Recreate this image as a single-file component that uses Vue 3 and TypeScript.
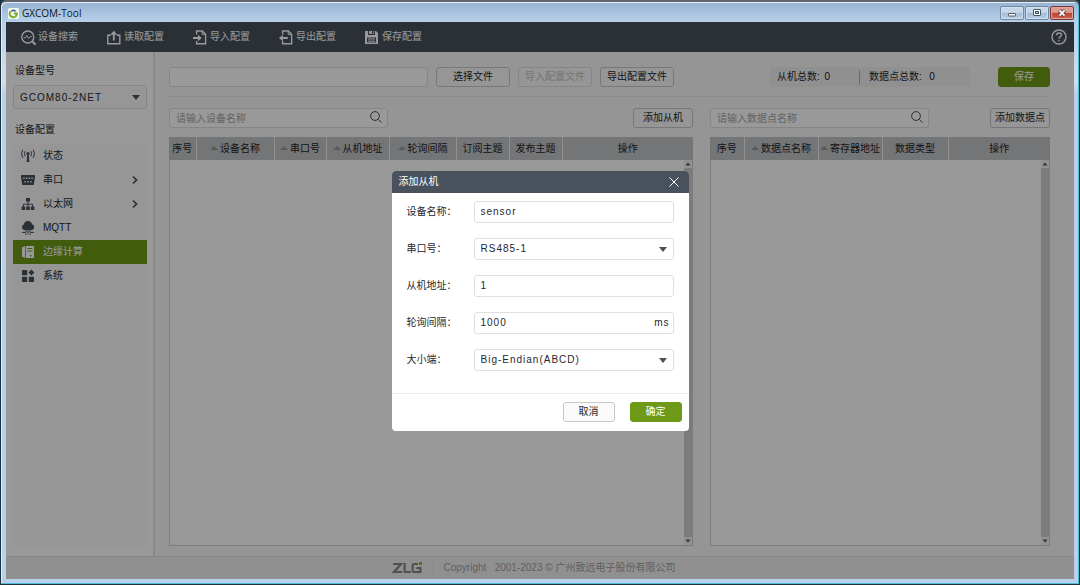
<script setup lang="ts">
import { ref } from 'vue'

interface Column { title: string; width?: number; sortable?: boolean }
interface MenuItem { id: string; title: string; expandable?: boolean }

const tools = [
  { id: 'search', title: '设备搜索' },
  { id: 'read', title: '读取配置' },
  { id: 'import', title: '导入配置' },
  { id: 'export', title: '导出配置' },
  { id: 'save', title: '保存配置' },
]

const menu: MenuItem[] = [
  { id: 'status', title: '状态' },
  { id: 'serial', title: '串口', expandable: true },
  { id: 'ethernet', title: '以太网', expandable: true },
  { id: 'mqtt', title: 'MQTT' },
  { id: 'edge', title: '边缘计算' },
  { id: 'system', title: '系统' },
]
const active = ref('edge')

const slaveColumns: Column[] = [
  { title: '序号', width: 27 },
  { title: '设备名称', width: 78, sortable: true },
  { title: '串口号', width: 52, sortable: true },
  { title: '从机地址', width: 63, sortable: true },
  { title: '轮询间隔', width: 67, sortable: true },
  { title: '订阅主题', width: 53 },
  { title: '发布主题', width: 53 },
  { title: '操作' },
]
const pointColumns: Column[] = [
  { title: '序号', width: 34 },
  { title: '数据点名称', width: 74, sortable: true },
  { title: '寄存器地址', width: 64, sortable: true },
  { title: '数据类型', width: 66 },
  { title: '操作' },
]
const panels = [
  { id: 'slave', placeholder: '请输入设备名称', action: '添加从机', columns: slaveColumns },
  { id: 'point', placeholder: '请输入数据点名称', action: '添加数据点', columns: pointColumns },
]

const model = ref('GCOM80-2NET')
const filePath = ref('')
const slaveCount = ref(0)
const pointCount = ref(0)
const dialogOpen = ref(true)
const form = ref({ name: 'sensor', port: 'RS485-1', address: '1', interval: '1000', endian: 'Big-Endian(ABCD)' })
</script>

<template>
  <div class="window">
    <header class="titlebar">
      <svg class="app-icon" viewBox="0 0 12 12">
        <rect width="12" height="12" rx="2" fill="#f4f7f4" />
        <path d="M2.6 3.6A4 4 0 1 0 9.8 6H6.4" fill="none" stroke="#7fae2c" stroke-width="2.2" />
        <path d="M2.6 3.6Q6 0 9.4 3.4L7.6 4Q6 2.6 4.4 4Z" fill="#315c7c" />
      </svg>
      <span class="app-title">GXCOM-Tool</span>
      <div class="window-buttons">
        <button type="button" aria-label="最小化">
          <svg viewBox="0 0 22 12"><rect x="7.5" y="6.5" width="7" height="2.5" rx="0.5" fill="#fff" stroke="#4b5868" /></svg>
        </button>
        <button type="button" aria-label="最大化">
          <svg viewBox="0 0 22 12"><rect x="7.5" y="2.5" width="7" height="6" rx="0.5" fill="#fff" stroke="#4b5868" /><rect x="9.5" y="4.5" width="3" height="2" fill="#a9c0da" stroke="#4b5868" /></svg>
        </button>
        <button type="button" class="close" aria-label="关闭">
          <svg viewBox="0 0 22 12"><path d="M8.3 3.2L13.7 8.8M13.7 3.2L8.3 8.8" stroke="#5b3a40" stroke-width="3.4" /><path d="M8.5 3.3L13.5 8.7M13.5 3.3L8.5 8.7" stroke="#fff" stroke-width="1.9" /></svg>
        </button>
      </div>
    </header>

    <div class="client">
      <nav class="toolbar">
        <button v-for="tool in tools" :key="tool.id" type="button" class="tool">
          <svg v-if="tool.id === 'search'" viewBox="0 0 15 15"><circle cx="6.8" cy="7" r="6" /><path d="M11.2 11.4L14.6 14.8" stroke-width="2" /><path d="M2.8 7.8H4.3L5.8 5.4L7.6 8.6L9 6.6H10.8" stroke-width="1" /></svg>
          <svg v-else-if="tool.id === 'read'" viewBox="0 0 15 15"><path d="M3.8 5.2H.8V13.8H12.8V5.2H9.8" /><path d="M6.8 10.5V3" stroke-width="1.8" /><path d="M3.2 4.8L6.8 .8L10.4 4.8Z" class="solid" /></svg>
          <svg v-else-if="tool.id === 'import'" viewBox="0 0 15 15"><path d="M3.6 4.5V1H9.4L12.6 4.2V13.8H3.6V11" /><path d="M9.2 1V4.4H12.6" stroke-width="1" /><path d="M0 8H5.5" stroke-width="2" /><path d="M5 4.8L8.8 8L5 11.2Z" class="solid" /></svg>
          <svg v-else-if="tool.id === 'export'" viewBox="0 0 15 15"><path d="M3.6 4.5V1H9.4L12.6 4.2V13.8H3.6V11" /><path d="M9.2 1V4.4H12.6" stroke-width="1" /><path d="M3.4 8H8.8" stroke-width="2" /><path d="M3.8 4.8L0 8L3.8 11.2Z" class="solid" /></svg>
          <svg v-else viewBox="0 0 15 15"><path d="M0 1H3V5H10V1H11L13 3V14H0Z M2 7.4V12.6H11V7.4Z" fill-rule="evenodd" class="solid" /><path d="M4 1V3.8H9V1" class="solid" /><path d="M7.6 1.2V3.4" stroke="#49515c" stroke-width="1.4" /><path d="M3 9H10M3 11.2H10" stroke-width="1" /></svg>
          <span>{{ tool.title }}</span>
        </button>
        <button type="button" class="help" aria-label="帮助">
          <svg viewBox="0 0 16 16"><circle cx="8" cy="8" r="7" /><path d="M5.6 6.3Q5.6 4 8 4T10.4 6.1Q10.4 7.2 9.2 7.8Q8 8.4 8 9.7" /><path d="M8 10.9V12.3" /></svg>
        </button>
      </nav>

      <div class="workspace">
        <aside class="sidebar">
          <label for="model">设备型号</label>
          <div class="select model">
            <select id="model" v-model="model"><option>GCOM80-2NET</option></select>
            <svg viewBox="0 0 8 5"><path d="M0 0H8L4 5Z" /></svg>
          </div>
          <h2>设备配置</h2>
          <nav class="menu">
            <button v-for="item in menu" :key="item.id" type="button" :class="{ active: active === item.id }" @click="active = item.id">
              <svg v-if="item.id === 'status'" viewBox="0 0 14 14"><circle cx="7" cy="4.6" r="1.6" /><path d="M6.2 6H7.8L8.4 13H5.6Z" /><path class="line" d="M4.2 2.2Q2.8 4.8 4.2 7.4M9.8 2.2Q11.2 4.8 9.8 7.4M1.8 .8Q-.8 4.8 1.8 8.8M12.2 .8Q14.8 4.8 12.2 8.8" /></svg>
              <svg v-else-if="item.id === 'serial'" viewBox="0 0 14 14"><path fill-rule="evenodd" d="M0 2H14V4L12.8 12H1.2L0 4ZM2.2 4.6V6H3.6V4.6ZM4.8 4.6V6H6.2V4.6ZM7.6 4.6V6H9V4.6ZM10.4 4.6V6H11.8V4.6ZM3.4 8V9.4H4.8V8ZM6.3 8V9.4H7.7V8ZM9.2 8V9.4H10.6V8Z" /></svg>
              <svg v-else-if="item.id === 'ethernet'" viewBox="0 0 14 14"><path d="M5 1H9V4.6H5ZM.6 9.6H4.2V13H.6ZM5.2 9.6H8.8V13H5.2ZM9.8 9.6H13.4V13H9.8Z" /><path class="line" d="M7 4V10M2.4 10V7.2H11.6V10" /></svg>
              <svg v-else-if="item.id === 'mqtt'" viewBox="0 0 14 14"><path d="M3 9A3 3 0 0 1 2.8 3.4A4.2 4.2 0 0 1 11 3.2A3 3 0 0 1 11 9Z" /><path class="line" d="M7 8V13.2M5 8.4V11.4H1M9 8.4V11.4H13M4 13.2H5.6M8.4 13.2H10" /></svg>
              <svg v-else-if="item.id === 'edge'" viewBox="0 0 14 14"><path d="M1 2.4L4.2 1V13L1 11.6Z" /><path fill-rule="evenodd" d="M5 1H13V13H5ZM6.4 3V4H11.4V3ZM6.4 5.6V6.6H11.4V5.6ZM9 10V11.6H10.6V10Z" /></svg>
              <svg v-else viewBox="0 0 14 14"><path d="M1 1H6.2V6.2H1ZM1 7.8H6.2V13H1ZM7.8 7.8H13V13H7.8ZM10.4 .6L13.4 3.6L10.4 6.6L7.4 3.6Z" /></svg>
              <span>{{ item.title }}</span>
              <svg v-if="item.expandable" class="chevron" viewBox="0 0 6 8"><path d="M1 .6L4.6 4L1 7.4" /></svg>
            </button>
          </nav>
        </aside>

        <main class="content">
          <div class="file-row">
            <input id="file" v-model="filePath" type="text" aria-label="文件路径">
            <button type="button" class="btn file-btn">选择文件</button>
            <button type="button" class="btn file-btn" disabled>导入配置文件</button>
            <button type="button" class="btn file-btn">导出配置文件</button>
            <div class="stats">
              <span>从机总数: <b>{{ slaveCount }}</b></span>
              <span>数据点总数: &nbsp;<b>{{ pointCount }}</b></span>
            </div>
            <button type="button" class="btn primary">保存</button>
          </div>

          <div class="panels">
            <section v-for="panel in panels" :key="panel.id" class="panel">
              <div class="panel-head">
                <div class="search">
                  <input type="text" :id="panel.id" :placeholder="panel.placeholder" :aria-label="panel.placeholder">
                  <svg viewBox="0 0 12 12"><circle cx="5" cy="5" r="4.4" /><path d="M8.2 8.4L11.6 11.6" /></svg>
                </div>
                <button type="button" class="btn add">{{ panel.action }}</button>
              </div>
              <div class="grid">
                <table>
                  <colgroup>
                    <col v-for="col in panel.columns" :key="col.title" :width="col.width">
                  </colgroup>
                  <thead>
                    <tr>
                      <th v-for="col in panel.columns" :key="col.title" scope="col">
                        <svg v-if="col.sortable" viewBox="0 0 8 4"><path d="M0 4L4 0L8 4Z" /></svg>{{ col.title }}
                      </th>
                    </tr>
                  </thead>
                </table>
                <div class="rows">
                  <div class="scrollbar">
                    <svg viewBox="0 0 8 8"><path d="M1.5 5.5L4 2.5L6.5 5.5Z" /></svg>
                    <svg viewBox="0 0 8 8"><path d="M1.5 2.5L4 5.5L6.5 2.5Z" /></svg>
                  </div>
                </div>
              </div>
            </section>
          </div>
        </main>
      </div>

      <footer class="footer">
        <svg class="logo" viewBox="0 0 30 12" aria-label="ZLG">
          <path d="M1 2H9L2 10H10M12.6 1V10H19M26 2H22.6Q20.6 2 20.6 4V8Q20.6 10 22.6 10H28.4V6H24.4" />
          <rect x="27" y="0" width="3" height="3" />
        </svg>
        <span class="copyright">Copyright &nbsp; 2001-2023 © 广州致远电子股份有限公司</span>
      </footer>

      <div v-if="dialogOpen" class="overlay">
        <form class="dialog" role="dialog" aria-labelledby="dialog-title" @submit.prevent="dialogOpen = false">
          <div class="dialog-head">
            <span id="dialog-title">添加从机</span>
            <button type="button" aria-label="关闭" @click="dialogOpen = false">
              <svg viewBox="0 0 10 10"><path d="M.5 .5L9.5 9.5M9.5 .5L.5 9.5" /></svg>
            </button>
          </div>
          <div class="dialog-body">
            <div class="field">
              <label for="name">设备名称：</label>
              <input id="name" v-model="form.name" type="text">
            </div>
            <div class="field">
              <label for="port">串口号：</label>
              <div class="select">
                <select id="port" v-model="form.port"><option>RS485-1</option></select>
                <svg viewBox="0 0 8 5"><path d="M0 0H8L4 5Z" /></svg>
              </div>
            </div>
            <div class="field">
              <label for="address">从机地址：</label>
              <input id="address" v-model="form.address" type="text">
            </div>
            <div class="field">
              <label for="interval">轮询间隔：</label>
              <div class="select">
                <input id="interval" v-model="form.interval" type="text">
                <span class="unit">ms</span>
              </div>
            </div>
            <div class="field">
              <label for="endian">大小端：</label>
              <div class="select">
                <select id="endian" v-model="form.endian"><option>Big-Endian(ABCD)</option></select>
                <svg viewBox="0 0 8 5"><path d="M0 0H8L4 5Z" /></svg>
              </div>
            </div>
          </div>
          <div class="dialog-foot">
            <button type="button" class="btn" @click="dialogOpen = false">取消</button>
            <button type="submit" class="btn primary">确定</button>
          </div>
        </form>
      </div>
    </div>
  </div>
</template>

<style>
body { background: #0d3440; }
</style>

<style scoped>
* { box-sizing: border-box; }
.window {
  display: flex;
  flex-direction: column;
  height: 100vh;
  padding: 0 4px 5px;
  border: 1px solid #20333d;
  border-top: 2px solid #5f666d;
  border-radius: 6px 6px 0 0;
  box-shadow: inset -1px -1px 0 #50bcdc, inset 1px 1px 0 #e4eef8;
  background: linear-gradient(#98b4d3, #b8d0e9 20px, #cfdff0 80px, #b9d1ea 92px);
  font: 10px/14px "Liberation Sans", "Noto Sans CJK SC", sans-serif;
  color: #24282e;
}
button, input, select { font: inherit; color: inherit; margin: 0; }
button { padding: 0; border: 0; background: none; white-space: nowrap; }
svg { display: block; flex: none; }
.titlebar { display: flex; align-items: center; height: 20px; padding: 2px 0 0 3px; flex: none; }
.app-icon { width: 11px; height: 11px; }
.app-title { margin-left: 3px; font: 10px/16px "Open Sans", sans-serif; color: #101820; }
.window-buttons { display: flex; gap: 1px; margin-left: auto; padding-right: 1px; }
.window-buttons button {
  width: 24px; height: 14px;
  border: 1px solid #71879f; border-radius: 2px;
  background: linear-gradient(#c5d7e9 45%, #a3bdd7 50%, #b8cee4);
  box-shadow: inset 0 0 0 1px #d2e1f0;
}
.window-buttons svg { width: 22px; height: 12px; }
.window-buttons .close { border-color: #7a3437; background: linear-gradient(#dc9c90 45%, #bd4532 50%, #cc6650); box-shadow: inset 0 0 0 1px #dfa699; }
.client { position: relative; display: flex; flex-direction: column; flex: 1; min-height: 0; margin: 0 1px; background: #f8f8f8; }
.toolbar { display: flex; align-items: center; gap: 29px; height: 30px; padding: 0 6px 0 15px; background: #49515c; flex: none; }
.tool { display: flex; align-items: center; gap: 2px; color: #fff; line-height: 16px; }
.tool svg { width: 15px; height: 15px; fill: none; stroke: #fff; stroke-width: 1.4; }
.tool .solid { fill: #fff; stroke: none; }
.help { margin-left: auto; }
.help svg { width: 18px; height: 16px; fill: none; stroke: #fff; stroke-width: 1.4; }
.workspace { display: flex; flex: 1; min-height: 0; }
.sidebar { display: flex; flex-direction: column; width: 149px; padding: 12px 6px 10px 7px; border-right: 2px solid #e6e6e6; background: #fff; flex: none; }
.sidebar label, .sidebar h2 { margin: 0 2px; font-size: 10px; font-weight: 400; line-height: 14px; }
.sidebar h2 { margin-top: 14px; }
input, select { width: 100%; height: 22px; padding: 0 6px; border: 1px solid #dfdfdf; border-radius: 3px; background: #fff; letter-spacing: 1px; outline: 0; }
select { appearance: none; }
.select, .search { position: relative; min-width: 0; }
.select svg { position: absolute; right: 7px; top: calc(50% - 2px); width: 8px; height: 5px; fill: #49515c; pointer-events: none; }
.model { margin-top: 7px; }
.model select { height: 24px; padding-top: 1px; background: #fafafa; }
.menu { flex: 1; margin-top: 7px; background: #fafafa; }
.menu button { display: flex; align-items: center; gap: 8px; width: 100%; height: 24px; padding: 0 9px 0 8px; text-align: left; }
.menu svg { width: 14px; height: 14px; fill: #49515c; }
.menu .line { fill: none; stroke: #49515c; stroke-width: 1; }
.menu .chevron { width: 6px; height: 8px; margin-left: auto; fill: none; stroke: #49515c; stroke-width: 1.6; }
.menu .active { background: #6f9a17; color: #fff; }
.menu .active svg { fill: #fff; }
.content { display: flex; flex-direction: column; flex: 1; min-width: 0; padding: 15px 24px 10px 14px; }
.file-row { display: flex; align-items: center; gap: 8px; padding-bottom: 9px; border-bottom: 1px solid #eaeaea; }
.file-row input { width: 259px; height: 20px; }
.btn { height: 20px; min-width: 52px; border: 1px solid #c8c8c8; border-radius: 3px; background: #fafafa; line-height: 16px; }
.btn:disabled { border-color: #dedede; color: #c4c4c4; }
.btn.primary { border-color: #6f9a17; background: #6f9a17; color: #fff; }
.file-btn { width: 74px; }
.stats { display: flex; align-items: center; width: 200px; height: 20px; margin-left: auto; padding: 0 7px; border-radius: 3px; background: #f1f1f1; }
.stats span { flex: 1; }
.stats span + span { flex: none; width: 104px; padding-left: 9px; border-left: 1px solid #b0b0b0; }
.stats b { font-weight: 400; margin-left: 2px; color: #111; }
.file-row .primary { margin-left: 20px; }
.panels { display: grid; grid-template-columns: minmax(0, 524fr) minmax(0, 340fr); gap: 17px; flex: 1; min-height: 0; padding-top: 11px; }
.panel { display: flex; flex-direction: column; min-width: 0; }
.panel-head { display: flex; justify-content: space-between; align-items: center; }
.search { width: 219px; }
.search input { height: 20px; letter-spacing: 0; }
.search input::placeholder { color: #a4a4a4; opacity: 1; }
.search svg { position: absolute; right: 6px; top: 3px; width: 12px; height: 12px; fill: none; stroke: #49515c; stroke-width: 1; }
.add { width: 60px; }
.grid { display: flex; flex-direction: column; flex: 1; margin-top: 9px; }
table { width: 100%; table-layout: fixed; border-collapse: collapse; background: #c2c3c6; }
th { height: 23px; padding: 0; border-right: 1px solid #f0f0f0; font-weight: 400; white-space: nowrap; color: #222; }
th:last-child { border-right: 0; }
th svg { display: inline-block; width: 8px; height: 4px; margin-right: 2px; vertical-align: 2px; fill: #94969a; }
.rows { display: flex; justify-content: flex-end; flex: 1; border: 1px solid #cfcfcf; border-top: 0; background: #fff; }
.scrollbar { display: flex; flex-direction: column; justify-content: space-between; width: 8px; background: #cfcfcf; }
.scrollbar svg { width: 8px; height: 8px; background: #f2f2f2; fill: #555; }
.footer { display: flex; justify-content: center; align-items: center; height: 23px; border-top: 1px solid #e2e2e2; background: #f1f1f1; flex: none; }
.logo { width: 30px; height: 12px; fill: none; stroke: #858585; stroke-width: 2.2; }
.logo rect { fill: #8bb62c; stroke: none; }
.copyright { min-width: 256px; margin-left: 11px; padding-left: 10px; border-left: 1px solid #dcdcdc; color: #a0a0a0; line-height: 12px; }
.overlay { position: absolute; inset: 0; display: grid; place-items: center; background: rgba(0, 0, 0, 0.4); }
.dialog { width: 297px; border-radius: 4px; background: #fff; overflow: hidden; }
.dialog-head { display: flex; justify-content: space-between; align-items: center; height: 22px; padding: 0 10px 0 7px; background: #49515c; color: #fff; }
.dialog-head svg { width: 10px; height: 10px; fill: none; stroke: #fff; stroke-width: 1; }
.dialog-body { display: flex; flex-direction: column; gap: 15px; padding: 8px 15px 22px; }
.field { display: grid; grid-template-columns: 67px minmax(0, 1fr); align-items: center; }
.unit { position: absolute; right: 4px; top: 4px; letter-spacing: 1px; }
.dialog-foot { display: flex; justify-content: flex-end; gap: 15px; padding: 8px 7px 9px; border-top: 1px solid #ececec; }
</style>
